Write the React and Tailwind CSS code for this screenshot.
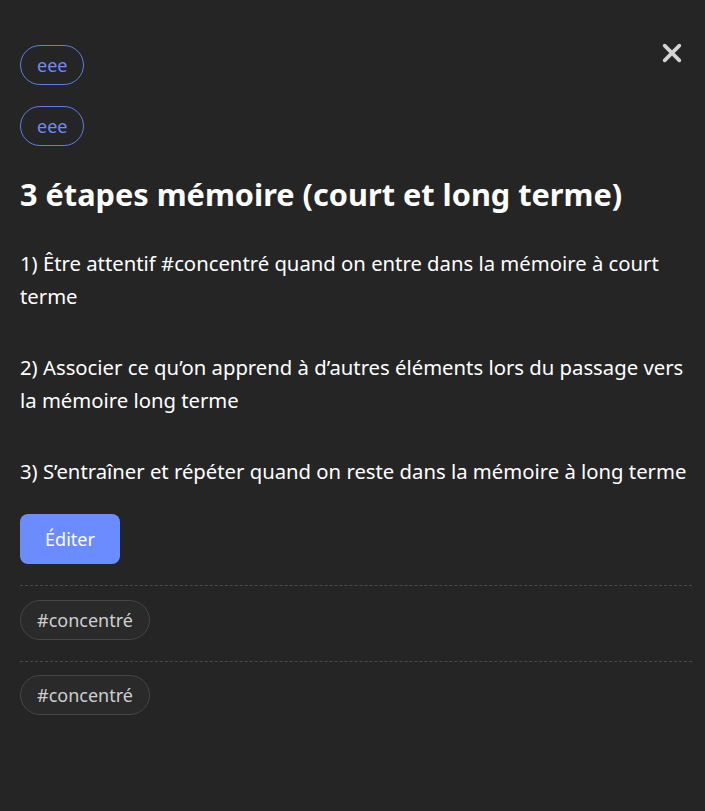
export default function App() {
  const font = { fontFamily: '"Segoe UI", "Noto Sans", sans-serif' };
  return (
    <div className="min-h-screen bg-[#252525] text-white" style={font}>
      <div className="relative pl-5 pr-[13px] pt-[45px] pb-10">
        <button className="absolute right-[22px] top-[42px] text-[#d4d4d4]" aria-label="Fermer">
          <svg width="22" height="22" viewBox="0 0 24 24" fill="none" stroke="currentColor" strokeWidth="4" strokeLinecap="round">
            <path d="M4 4l16 16M20 4L4 20" />
          </svg>
        </button>

        <div className="flex flex-col items-start gap-[21px]">
          <span className="flex h-10 items-center rounded-full border border-[#5f7de6] px-4 text-[18px] text-[#6d8cf5]">eee</span>
          <span className="flex h-10 items-center rounded-full border border-[#5f7de6] px-4 text-[18px] text-[#6d8cf5]">eee</span>
        </div>

        <h1 className="mt-[26px] text-[30.7px] font-bold leading-[44px]">3 étapes mémoire (court et long terme)</h1>

        <div className="mt-[31px] text-[20.3px] leading-[33px]">
          <p>1) Être attentif #concentré quand on entre dans la mémoire à court terme</p>
          <p className="mt-[38px]">2) Associer ce qu’on apprend à d’autres éléments lors du passage vers la mémoire long terme</p>
          <p className="mt-[38px]">3) S’entraîner et répéter quand on reste dans la mémoire à long terme</p>
        </div>

        <button className="mt-[26px] h-[50px] w-[100px] rounded-lg bg-[#6b8cff] text-[18px] text-white">Éditer</button>

        <div className="mt-[21px] border-t border-dashed border-[#4a4a4a]" />
        <div className="pt-[14px] pb-[21px]">
          <span className="inline-flex h-10 items-center rounded-full border border-[#454545] bg-[#2a2a2a] px-4 text-[18px] text-[#cfcfcf]">#concentré</span>
        </div>
        <div className="border-t border-dashed border-[#4a4a4a]" />
        <div className="pt-[13px]">
          <span className="inline-flex h-10 items-center rounded-full border border-[#454545] bg-[#2a2a2a] px-4 text-[18px] text-[#cfcfcf]">#concentré</span>
        </div>
      </div>
    </div>
  );
}
